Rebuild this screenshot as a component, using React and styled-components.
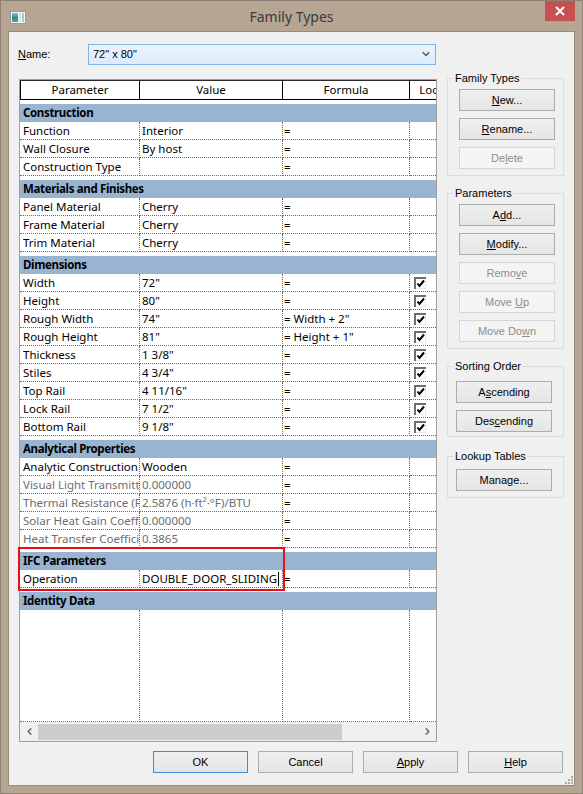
import React from "react";
import styled, { createGlobalStyle } from "styled-components";
import { ChevronDown, ChevronLeft, ChevronRight } from "lucide-react";

const GlobalStyle = createGlobalStyle`
    body {
        margin: 0;
        background: #ffffff;
    }
    * {
        box-sizing: border-box;
    }
`;

const UI_FONT = `"Liberation Sans", Arial, sans-serif`;
const GRID_FONT = `"Noto Sans", "Open Sans", sans-serif`;
const COLUMNS = "120px 143px 127px 44px";

const Window = styled.div`
    width: 583px;
    height: 794px;
    background: #b6a593;
    border: 1px solid #8e8072;
    display: flex;
    flex-direction: column;
`;

const TitleBar = styled.div`
    height: 30px;
    display: grid;
    grid-template-columns: 1fr auto 1fr;
    align-items: center;
`;

const TitleText = styled.div`
    font-family: ${GRID_FONT};
    font-size: 14px;
    color: #3a3a3a;
    padding-top: 1px;
`;

const IconSlot = styled.div`
    padding-left: 9px;
    display: flex;
    align-items: center;
    padding-top: 2px;
`;

const CloseSlot = styled.div`
    justify-self: end;
    align-self: start;
    margin-right: 7px;
`;

const CloseButton = styled.div`
    width: 30px;
    height: 20px;
    background: #c75050;
    display: flex;
    align-items: center;
    justify-content: center;
`;

const Client = styled.div`
    flex: 1;
    margin: 0 7px 7px 7px;
    border: 1px solid #988979;
    background: #f0f0f0;
    padding: 12px 10px 12px 10px;
    display: flex;
    flex-direction: column;
    position: relative;
`;

const NameRow = styled.div`
    display: flex;
    align-items: center;
    height: 20px;
`;

const NameLabel = styled.div`
    width: 70px;
    margin-left: -1px;
    font-family: ${UI_FONT};
    font-size: 11px;
    color: #000;
`;

const Combo = styled.div`
    width: 348px;
    height: 21px;
    border: 1px solid #7eb4ea;
    background: linear-gradient(#ecf4fc, #dcecfc);
    display: flex;
    align-items: center;
    justify-content: space-between;
    padding: 0 3px 0 4px;
    font-family: ${UI_FONT};
    font-size: 11px;
    color: #000;
`;

const Main = styled.div`
    display: flex;
    gap: 10px;
    margin-top: 15px;
`;

const TableFrame = styled.div`
    width: 418px;
    height: 663px;
    border: 1px solid #a0a0a0;
    background: #ffffff;
    display: flex;
    flex-direction: column;
    position: relative;
`;

const Viewport = styled.div`
    flex: 1;
    overflow: hidden;
    display: flex;
    flex-direction: column;
`;

const HeaderRow = styled.div`
    width: 434px;
    height: 20px;
    flex: none;
    display: grid;
    grid-template-columns: 119px 143px 127px 44px;
    border-top: 1px solid #2a2a2a;
    border-left: 1px solid #000;
`;

const HeaderCell = styled.div`
    border-right: 1px solid #000;
    border-bottom: 1px solid #000;
    font-family: ${GRID_FONT};
    font-size: 11.5px;
    line-height: 18px;
    text-align: center;
    white-space: nowrap;
    overflow: hidden;
    color: #000;
`;

const Body = styled.div`
    width: 434px;
    flex: 1;
    display: flex;
    flex-direction: column;
`;

const Section = styled.div`
    padding-top: 4px;
`;

const SectionTitle = styled.div`
    height: 18px;
    background: #99b4d1;
    padding-left: 3px;
    font-family: ${GRID_FONT};
    font-size: 11.5px;
    font-weight: 700;
    letter-spacing: -0.35px;
    line-height: 18px;
    color: #000;
`;

const Row = styled.div`
    height: 18px;
    display: grid;
    grid-template-columns: ${COLUMNS};
`;

const Cell = styled.div`
    border-right: 1px dotted #6b6b6b;
    border-bottom: 1px dotted #6b6b6b;
    padding-left: ${(p) => p.$pad ?? 2}px;
    font-family: ${GRID_FONT};
    font-size: 11.5px;
    line-height: 17px;
    color: ${(p) => (p.$dim ? "#6d6d6d" : "#000")};
    white-space: nowrap;
    overflow: hidden;
    display: flex;
    align-items: center;
`;

const Caret = styled.span`
    display: inline-block;
    width: 1px;
    height: 14px;
    background: #000;
    margin-left: 1px;
`;

const Filler = styled.div`
    flex: 1;
    display: grid;
    grid-template-columns: ${COLUMNS};
`;

const FillerCell = styled.div`
    border-right: 1px dotted #6b6b6b;
    border-bottom: 1px dotted #6b6b6b;
`;

const HScroll = styled.div`
    height: 19px;
    flex: none;
    background: #f0f0f0;
    display: flex;
    align-items: center;
`;

const ScrollArrow = styled.div`
    width: 18px;
    height: 19px;
    display: flex;
    align-items: center;
    justify-content: center;
    color: #606060;
`;

const ScrollTrack = styled.div`
    flex: 1;
    height: 16px;
`;

const ScrollThumb = styled.div`
    width: 304px;
    height: 16px;
    background: #cdcdcd;
`;

const Highlight = styled.div`
    position: absolute;
    top: 467px;
    left: -2px;
    width: 267px;
    height: 44px;
    border: 2px solid #e81010;
    pointer-events: none;
`;

const Side = styled.div`
    width: 117px;
    margin-top: -1px;
    display: flex;
    flex-direction: column;
    gap: 17px;
`;

const GroupBox = styled.div`
    position: relative;
    border: 1px solid #dcdcdc;
    padding: ${(p) => p.$top}px 0 ${(p) => p.$bottom}px ${(p) => p.$inset}px;
    margin-top: ${(p) => p.$shift || 0}px;
    display: flex;
    flex-direction: column;
    gap: 7px;
`;

const Legend = styled.div`
    position: absolute;
    top: -8px;
    left: 6px;
    padding: 0 1px;
    background: #f0f0f0;
    font-family: ${UI_FONT};
    font-size: 11px;
    line-height: 14px;
    color: #000;
`;

const Button = styled.div`
    width: ${(p) => p.$width || 96}px;
    height: 22px;
    flex: none;
    border: 1px solid ${(p) => (p.$default ? "#3c8fdc" : p.$disabled ? "#d5d5d5" : "#acacac")};
    background: ${(p) => (p.$disabled ? "#f4f4f4" : "linear-gradient(#efefef, #e5e5e5)")};
    color: ${(p) => (p.$disabled ? "#8d8d8d" : "#000")};
    font-family: ${UI_FONT};
    font-size: 11px;
    line-height: 20px;
    text-align: center;
    white-space: nowrap;
`;

const Footer = styled.div`
    display: flex;
    justify-content: flex-end;
    gap: 10px;
    margin-top: 9px;
    padding-right: 1px;
`;

const Grip = styled.div`
    position: absolute;
    right: 1px;
    bottom: 1px;
    line-height: 0;
`;

const sections = [
    {
        title: "Construction",
        rows: [
            ["Function", "Interior", "="],
            ["Wall Closure", "By host", "="],
            ["Construction Type", "", "="],
        ],
    },
    {
        title: "Materials and Finishes",
        rows: [
            ["Panel Material", "Cherry", "="],
            ["Frame Material", "Cherry", "="],
            ["Trim Material", "Cherry", "="],
        ],
    },
    {
        title: "Dimensions",
        rows: [
            ["Width", '72"', "=", { lock: true }],
            ["Height", '80"', "=", { lock: true }],
            ["Rough Width", '74"', '= Width + 2"', { lock: true }],
            ["Rough Height", '81"', '= Height + 1"', { lock: true }],
            ["Thickness", '1 3/8"', "=", { lock: true }],
            ["Stiles", '4 3/4"', "=", { lock: true }],
            ["Top Rail", '4 11/16"', "=", { lock: true }],
            ["Lock Rail", '7 1/2"', "=", { lock: true }],
            ["Bottom Rail", '9 1/8"', "=", { lock: true }],
        ],
    },
    {
        title: "Analytical Properties",
        rows: [
            ["Analytic Construction", "Wooden", "="],
            ["Visual Light Transmittance", "0.000000", "=", { dim: true }],
            ["Thermal Resistance (R)", "2.5876 (h·ft²·°F)/BTU", "=", { dim: true }],
            ["Solar Heat Gain Coefficient", "0.000000", "=", { dim: true }],
            ["Heat Transfer Coefficient (U)", "0.3865", "=", { dim: true }],
        ],
    },
    {
        title: "IFC Parameters",
        rows: [["Operation", "DOUBLE_DOOR_SLIDING", "=", { caret: true }]],
    },
    {
        title: "Identity Data",
        rows: [],
    },
];

function FamilyIcon() {
    return (
        <svg width="16" height="13" viewBox="0 0 16 13">
            <defs>
                <linearGradient id="fam" x1="0" y1="0" x2="0" y2="1">
                    <stop offset="0" stopColor="#8fc3d8" />
                    <stop offset="0.5" stopColor="#2e8a8a" />
                    <stop offset="1" stopColor="#5aa07a" />
                </linearGradient>
            </defs>
            <rect x="0.5" y="0.5" width="15" height="12" fill="#f4f4f4" stroke="#9a9a9a" />
            <rect x="2" y="2" width="6" height="9" fill="url(#fam)" />
            <rect x="9" y="2" width="2" height="9" fill="#cfe3ee" />
            <rect x="12" y="2" width="2" height="9" fill="#9fc8d8" />
        </svg>
    );
}

function LockBox() {
    return (
        <svg width="12" height="12" viewBox="0 0 12 12">
            <rect x="0" y="0" width="12" height="12" fill="#ffffff" />
            <path d="M0 0 H12 V2 H2 V12 H0 Z" fill="#6e6e6e" />
            <path d="M12 2 V12 H2" fill="none" stroke="#d4d4d4" strokeWidth="1" />
            <path d="M3.5 6.5 L5.5 9 L10 3.5" fill="none" stroke="#000" strokeWidth="2" />
        </svg>
    );
}

function GridRow({ row }) {
    const [name, value, formula, opts = {}] = row;
    return (
        <Row>
            <Cell $pad={3} $dim={opts.dim}>{name}</Cell>
            <Cell $pad={2} $dim={opts.dim}>
                {value}
                {opts.caret && <Caret />}
            </Cell>
            <Cell $pad={1}>{formula}</Cell>
            <Cell $pad={4}>{opts.lock && <LockBox />}</Cell>
        </Row>
    );
}

function App() {
    return (
        <>
            <GlobalStyle />
            <Window>
                <TitleBar>
                    <IconSlot>
                        <FamilyIcon />
                    </IconSlot>
                    <TitleText>Family Types</TitleText>
                    <CloseSlot>
                        <CloseButton>
                            <svg width="10" height="10" viewBox="0 0 10 10">
                                <path d="M1 1 L9 9 M9 1 L1 9" stroke="#fff" strokeWidth="2" />
                            </svg>
                        </CloseButton>
                    </CloseSlot>
                </TitleBar>

                <Client>
                    <NameRow>
                        <NameLabel>
                            <u>N</u>ame:
                        </NameLabel>
                        <Combo>
                            <span>72" x 80"</span>
                            <ChevronDown size={12} strokeWidth={2.5} color="#555" />
                        </Combo>
                    </NameRow>

                    <Main>
                        <TableFrame>
                            <Viewport>
                                <HeaderRow>
                                    <HeaderCell>Parameter</HeaderCell>
                                    <HeaderCell>Value</HeaderCell>
                                    <HeaderCell>Formula</HeaderCell>
                                    <HeaderCell>Lock</HeaderCell>
                                </HeaderRow>
                                <Body>
                                    {sections.map((section) => (
                                        <Section key={section.title}>
                                            <SectionTitle>{section.title}</SectionTitle>
                                            {section.rows.map((row) => (
                                                <GridRow key={row[0]} row={row} />
                                            ))}
                                        </Section>
                                    ))}
                                    <Filler>
                                        <FillerCell />
                                        <FillerCell />
                                        <FillerCell />
                                        <FillerCell />
                                    </Filler>
                                </Body>
                            </Viewport>
                            <HScroll>
                                <ScrollArrow>
                                    <ChevronLeft size={11} strokeWidth={3} />
                                </ScrollArrow>
                                <ScrollTrack>
                                    <ScrollThumb />
                                </ScrollTrack>
                                <ScrollArrow>
                                    <ChevronRight size={11} strokeWidth={3} />
                                </ScrollArrow>
                            </HScroll>
                            <Highlight />
                        </TableFrame>

                        <Side>
                            <GroupBox $top={10} $bottom={6} $inset={11}>
                                <Legend>Family Types</Legend>
                                <Button><u>N</u>ew...</Button>
                                <Button><u>R</u>ename...</Button>
                                <Button $disabled>De<u>l</u>ete</Button>
                            </GroupBox>
                            <GroupBox $top={10} $bottom={6} $inset={11}>
                                <Legend>Parameters</Legend>
                                <Button>A<u>d</u>d...</Button>
                                <Button><u>M</u>odify...</Button>
                                <Button $disabled>Remo<u>v</u>e</Button>
                                <Button $disabled>Move <u>U</u>p</Button>
                                <Button $disabled>Move Do<u>w</u>n</Button>
                            </GroupBox>
                            <GroupBox $top={14} $bottom={4} $inset={8}>
                                <Legend>Sorting Order</Legend>
                                <Button>A<u>s</u>cending</Button>
                                <Button>Des<u>c</u>ending</Button>
                            </GroupBox>
                            <GroupBox $top={12} $bottom={6} $inset={8} $shift={2}>
                                <Legend>Lookup Tables</Legend>
                                <Button>Mana<u>g</u>e...</Button>
                            </GroupBox>
                        </Side>
                    </Main>

                    <Footer>
                        <Button $width={95} $default>OK</Button>
                        <Button $width={95}>Cancel</Button>
                        <Button $width={95}><u>A</u>pply</Button>
                        <Button $width={95}><u>H</u>elp</Button>
                    </Footer>

                    <Grip>
                        <svg width="8" height="8" viewBox="0 0 8 8" fill="#a8a8a8">
                            <rect x="6" y="0" width="2" height="2" />
                            <rect x="3" y="3" width="2" height="2" />
                            <rect x="6" y="3" width="2" height="2" />
                            <rect x="0" y="6" width="2" height="2" />
                            <rect x="3" y="6" width="2" height="2" />
                            <rect x="6" y="6" width="2" height="2" />
                        </svg>
                    </Grip>
                </Client>
            </Window>
        </>
    );
}

export default App;
